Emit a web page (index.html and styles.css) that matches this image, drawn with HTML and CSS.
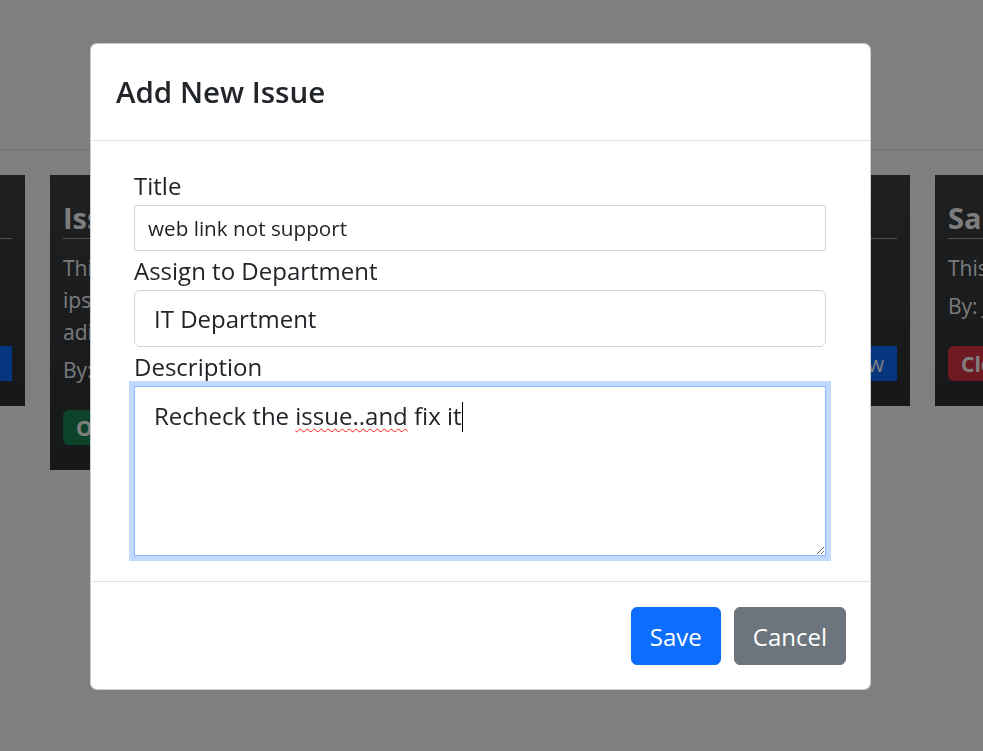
FILE: index.html
```html
<!DOCTYPE html>
<html lang="en">
<head>
<meta charset="utf-8">
<title>Issue Tracker</title>
<link rel="stylesheet" href="styles.css">
</head>
<body>
<header class="topbar"></header>
<main class="board">
  <div class="card-row">
    <article class="issue-card">
      <h3 class="issue-title">Issue One</h3>
      <p class="issue-desc">This is a sample.</p>
      <p class="issue-by">By: Admin</p>
      <div class="issue-actions"><span class="badge badge-open">Open</span><button class="card-btn">View</button></div>
    </article>
    <article class="issue-card">
      <h3 class="issue-title">Issue Two</h3>
      <p class="issue-desc">This is lorem<br>ipsum dolor sit amet<br>adipiscing elit.</p>
      <p class="issue-by">By: John</p>
      <div class="issue-actions"><span class="badge badge-open">Open</span><button class="card-btn">View</button></div>
    </article>
    <article class="issue-card">
      <h3 class="issue-title">Issue Three</h3>
      <p class="issue-desc">This is a sample.</p>
      <p class="issue-by">By: Jane</p>
      <div class="issue-actions"><span class="badge badge-open">Open</span><button class="card-btn">View</button></div>
    </article>
    <article class="issue-card">
      <h3 class="issue-title">Issue Four</h3>
      <p class="issue-desc">This is a test.</p>
      <p class="issue-by">By: Mark</p>
      <div class="issue-actions"><span class="badge badge-open">Open</span><button class="card-btn">View</button></div>
    </article>
    <article class="issue-card">
      <h3 class="issue-title">Sample Issue</h3>
      <p class="issue-desc">This is a sample.</p>
      <p class="issue-by">By: James</p>
      <div class="issue-actions"><span class="badge badge-closed">Closed</span><button class="card-btn">View</button></div>
    </article>
  </div>
</main>

<div class="backdrop"></div>

<div class="modal-layer">
  <section class="modal" role="dialog" aria-labelledby="modal-title">
    <header class="modal-header">
      <h2 class="modal-title" id="modal-title">Add New Issue</h2>
    </header>
    <form class="modal-body">
      <label class="form-label" for="f-title">Title</label>
      <input id="f-title" class="input input-sm" type="text" value="web link not support">
      <label class="form-label" for="f-dept">Assign to Department</label>
      <input id="f-dept" class="input input-rounded" type="text" value="IT Department">
      <label class="form-label" for="f-desc">Description</label>
      <div id="f-desc" class="textarea is-focused" role="textbox" aria-multiline="true">Recheck the <span class="misspelled">issue..and</span> fix it<span class="caret"></span></div>
    </form>
    <footer class="modal-footer">
      <button class="btn btn-primary" type="button">Save</button>
      <button class="btn btn-secondary" type="button">Cancel</button>
    </footer>
  </section>
</div>
</body>
</html>
```

FILE: styles.css
```css
* { box-sizing: border-box; }

html, body {
  margin: 0;
  padding: 0;
  height: 100%;
}

body {
  font-family: "Segoe UI", "Open Sans", "Noto Sans", sans-serif;
  color: #212529;
  background: #ffffff;
  overflow: hidden;
}

.topbar {
  height: 150px;
  border-bottom: 1px solid #e0e0e0;
  background: #ffffff;
}

.board {
  padding-top: 25px;
}

.card-row {
  display: flex;
  align-items: flex-start;
  gap: 25px;
  margin-left: -245px;
}

.issue-card {
  flex: 0 0 270px;
  padding: 26px 13px 25px;
  background: linear-gradient(180deg, #3e4044 0%, #2e3033 100%);
  color: #ffffff;
}

.issue-title {
  margin: 0;
  font-size: 29px;
  font-weight: 700;
  line-height: 34px;
  color: #fafafa;
  white-space: nowrap;
  overflow: hidden;
}

.issue-title::after {
  content: "";
  display: block;
  height: 1px;
  margin-top: 3px;
  background: rgba(255, 255, 255, 0.55);
}

.issue-desc,
.issue-by {
  margin: 0;
  font-size: 21px;
  line-height: 32px;
  color: #f2f4f6;
  white-space: nowrap;
}

.issue-desc {
  margin-top: 13px;
}

.issue-by {
  margin-top: 6px;
}

.issue-actions {
  display: flex;
  justify-content: space-between;
  align-items: center;
  margin-top: 24px;
}

.badge {
  display: inline-flex;
  align-items: center;
  height: 35px;
  padding: 0 13px;
  border-radius: 6px;
  font-size: 21px;
  font-weight: 700;
  color: #ffffff;
}

.badge-open { background: #198754; }
.badge-closed { background: #dc3545; }

.card-btn {
  height: 35px;
  padding: 0 13px;
  border: 0;
  border-radius: 0;
  background: #0d6efd;
  color: #ffffff;
  font-family: inherit;
  font-size: 21px;
}

.backdrop {
  position: fixed;
  inset: 0;
  background: rgba(0, 0, 0, 0.5);
}

.modal-layer {
  position: fixed;
  inset: 0;
  display: flex;
  justify-content: flex-start;
  align-items: flex-start;
  padding: 43px 0 0 90px;
}

.modal {
  width: 781px;
  background: #ffffff;
  border: 1px solid rgba(0, 0, 0, 0.2);
  border-radius: 7px;
}

.modal-header {
  padding: 30px 25px;
  border-bottom: 1px solid #dee2e6;
}

.modal-title {
  margin: 0;
  font-size: 29.5px;
  font-weight: 600;
  line-height: 36px;
  color: #212529;
}

.modal-body {
  display: flex;
  flex-direction: column;
  padding: 27px 44px 25px 43px;
}

.form-label {
  font-size: 24px;
  line-height: 36px;
  color: #212529;
  margin-bottom: 1px;
}

.input + .form-label {
  margin-top: 2px;
}

.input {
  display: block;
  width: 100%;
  border: 1px solid #ced4da;
  background: #ffffff;
  color: #212529;
  font-family: inherit;
  outline: none;
}

.input-sm {
  height: 46px;
  padding: 0 13px;
  font-size: 20.7px;
  border-radius: 2px;
}

.input-rounded {
  height: 57px;
  padding: 0 19px;
  font-size: 24px;
  border-radius: 6px;
}

.textarea {
  height: 170px;
  padding: 11px 19px;
  border: 1px solid #86b7fe;
  box-shadow: 0 0 0 5px #c3dafe;
  font-size: 24px;
  line-height: 36px;
  color: #212529;
  resize: both;
  overflow: auto;
}

.misspelled {
  text-decoration: underline wavy #ff1a1a;
  text-decoration-thickness: 1px;
  text-underline-offset: 3px;
}

.caret {
  display: inline-block;
  width: 1px;
  height: 30px;
  vertical-align: -7px;
  background: #000000;
}

.modal-footer {
  display: flex;
  justify-content: flex-end;
  gap: 13px;
  padding: 25px 24px 24px;
  border-top: 1px solid #dee2e6;
}

.btn {
  height: 58px;
  padding: 0 18px;
  border: 1px solid transparent;
  border-radius: 6px;
  font-family: inherit;
  font-size: 24px;
  color: #ffffff;
  cursor: pointer;
}

.btn-primary { background: #0d6efd; border-color: #0d6efd; }
.btn-secondary { background: #6c757d; border-color: #6c757d; }
```
